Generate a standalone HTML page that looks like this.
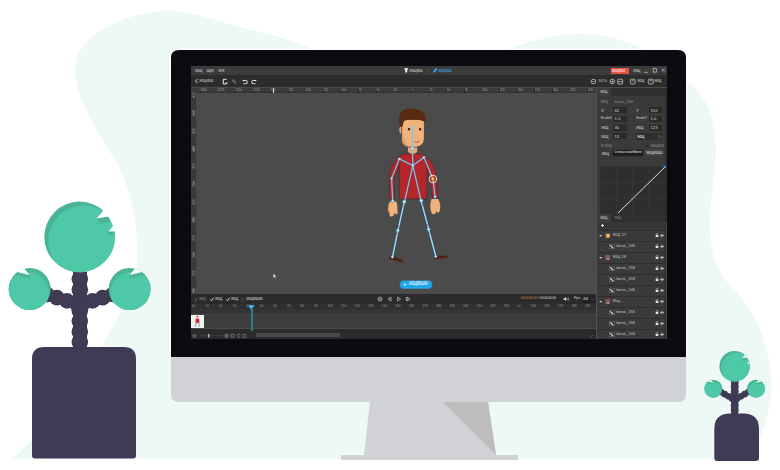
<!DOCTYPE html>
<html><head><meta charset="utf-8">
<style>
html,body{margin:0;padding:0;background:#fff;}
body{width:780px;height:470px;overflow:hidden;position:relative;font-family:"Liberation Sans",sans-serif;}
.a{position:absolute;}
.x{position:absolute;font-size:4.2px;line-height:5px;color:#dadada;white-space:nowrap;margin-top:-0.9px;}
.d{color:#8a8a8a;}
.inp{position:absolute;height:6px;background:#2a2a2a;}
svg{position:absolute;left:0;top:0;overflow:visible;}
</style></head><body>
<svg width="780" height="470" viewBox="0 0 780 470">
  <path fill="#eef8f5" d="M163 11 C120 14 78 36 75 66 C73 92 96 130 118 165 C134 195 140 240 136 270 C130 300 110 330 90 370 C60 420 30 440 12 459 L751 459 C760 440 769 415 771 398 C773 378 770 362 765 345 C760 322 748 305 734 289 C724 280 716 268 712 250 C706 215 714 190 716 150 C716 110 700 90 686 81 L686 50 L645 50 C620 38 600 34 579 34 C555 34 530 42 504 50 L316 50 C295 42 272 34 250 30 C220 22 190 10 163 11 Z"/>
  <path fill="#fff" d="M170 357 V58 Q170 49 179 49 H678 Q687 49 687 58 V357 Z"/>
  <path fill="#0b0b11" d="M171 358 V58 Q171 50 179 50 H678 Q686 50 686 58 V358 Z"/>
  <path fill="#d1d2d6" d="M171 357 L686 357 L686 394 Q686 402 678 402 L179 402 Q171 402 171 394 Z"/>
  <path fill="#d1d2d6" d="M370 402 L488 402 L496 455 L364 455 Z"/>
  <path fill="#bdbdbe" d="M443 402 L488 402 L496 455 Z"/>
  <rect x="341" y="455" width="177" height="5" fill="#d1d2d6"/>
</svg>
<!-- SCREEN -->
<div class="a" style="left:191px;top:66px;width:476px;height:273px;background:#4b4b4b;overflow:hidden;"></div>
<!-- menubar -->
<div class="a" style="left:191px;top:66px;width:476px;height:9.3px;background:#3b3b3c;"></div>
<div class="x" style="left:195px;top:68.5px;"><span style="letter-spacing:-0.45px">ЖЩ</span></div>
<div class="x" style="left:206.5px;top:68.5px;"><span style="letter-spacing:-0.45px">ЩЖ</span></div>
<div class="x" style="left:218px;top:68.5px;"><span style="letter-spacing:-0.45px">ЖФ</span></div>
<!-- center menu -->
<svg class="a" style="left:400px;top:66px" width="60" height="9" viewBox="400 66 60 9">
  <path d="M404.2 68.6 L405.6 68 Q406.2 68.8 406.8 68 L408.2 68.6 L407.6 70 L407.2 69.8 V72.4 H405.2 V69.8 L404.8 70 Z" fill="#f0f0f0"/>
  <path d="M426.5 68.8 L428 70.3 L426.5 71.8" stroke="#777" stroke-width="0.5" fill="none"/>
  <path d="M436.2 68 L433.5 71 L433.2 72.6 L434.8 72.2 L437.4 69.2 Z" fill="#3aaaf5"/>
</svg>
<div class="x" style="left:409px;top:68.5px;"><span style="letter-spacing:-0.45px">ЖЩФШ</span></div>
<div class="x" style="left:438px;top:68.5px;color:#45b4ff"><span style="letter-spacing:-0.45px">ЖЩФШ</span></div>
<!-- red badge -->
<div class="a" style="left:611px;top:68px;width:18px;height:6px;background:#e5523e;"></div>
<div class="x" style="left:611.5px;top:68.5px;color:#fff"><span style="letter-spacing:-0.45px">ЖЩФШ</span></div>
<div class="x" style="left:633px;top:68.5px;"><span style="letter-spacing:-0.45px">ЖЩ</span></div>
<svg class="a" style="left:640px;top:66px" width="27" height="9" viewBox="640 66 27 9">
  <path d="M644 72.3 H648" stroke="#ccc" stroke-width="0.7"/>
  <rect x="653.2" y="68.7" width="3.4" height="3.4" stroke="#ccc" stroke-width="0.7" fill="none"/>
  <path d="M661.8 68.6 L664.8 71.6 M664.8 68.6 L661.8 71.6" stroke="#ccc" stroke-width="0.7"/>
</svg>
<!-- toolbar -->
<div class="a" style="left:191px;top:75.3px;width:476px;height:12.2px;background:#2c2c2c;"></div>
<svg class="a" style="left:191px;top:74px;" width="476" height="14" viewBox="191 74 476 14">
  <path d="M197.5 79 L195.5 81 L197.5 83" stroke="#ddd" stroke-width="0.9" fill="none"/>
  <path d="M226.5 79.3 H223.3 V84 H226" stroke="#eee" stroke-width="1" fill="none"/>
  <circle cx="226.6" cy="83.2" r="0.9" fill="#eee"/>
  <path d="M232 80 L235.3 83.7 M233 79.2 L236.2 82.8" stroke="#888" stroke-width="0.9" fill="none"/>
  <path d="M243.3 80.5 H245.8 A1.6 1.6 0 0 1 245.8 83.7 H243.5" stroke="#eee" stroke-width="0.9" fill="none"/>
  <circle cx="243.3" cy="80.5" r="0.7" fill="#fff"/>
  <path d="M255.7 80.5 H253.2 A1.6 1.6 0 0 0 253.2 83.7 H255.5" stroke="#eee" stroke-width="0.9" fill="none"/>
  <circle cx="255.7" cy="80.5" r="0.7" fill="#fff"/>
  <circle cx="593.5" cy="81.5" r="2.3" stroke="#ddd" stroke-width="0.7" fill="none"/>
  <path d="M592.3 81.5 H594.7" stroke="#ddd" stroke-width="0.6"/>
  <circle cx="612.3" cy="81.5" r="2.3" stroke="#ddd" stroke-width="0.7" fill="none"/>
  <path d="M611.1 81.5 H613.5 M612.3 80.3 V82.7" stroke="#ddd" stroke-width="0.6"/>
  <rect x="617.8" y="79.2" width="4.8" height="4.8" rx="0.6" stroke="#ddd" stroke-width="0.7" fill="none"/>
  <path d="M617.8 81.6 H622.6" stroke="#ddd" stroke-width="0.6"/>
  <rect x="630.3" y="79.2" width="4.8" height="4.8" rx="1" stroke="#ddd" stroke-width="0.7" fill="none"/>
  <path d="M631.5 80.8 H634" stroke="#ddd" stroke-width="0.6"/>
  <rect x="648.3" y="79.2" width="4.8" height="4.8" rx="1" stroke="#ddd" stroke-width="0.7" fill="none"/>
  <path d="M649.5 80.8 H652" stroke="#ddd" stroke-width="0.6"/>
</svg>
<div class="x" style="left:199px;top:79px;letter-spacing:-0.2px">ЖЩФШ</div>
<div class="x" style="left:598.5px;top:79px;font-size:4.2px">51%</div>
<div class="x" style="left:637px;top:79px;"><span style="letter-spacing:-0.45px">ЖЩ</span></div>
<div class="x" style="left:654px;top:79px;"><span style="letter-spacing:-0.45px">ЖЩ</span></div>
<!-- top ruler -->
<div class="a" style="left:191px;top:87.5px;width:406px;height:5px;background:#3a3a3a;"></div>
<div class="a" style="left:196px;top:91.5px;width:401px;height:1px;background:repeating-linear-gradient(90deg,#2a2a2a 0 1px,transparent 1px 3.4px);"></div>
<div class="a" style="left:196px;top:87.5px;width:401px;height:5px;background:repeating-linear-gradient(90deg,#222 0 0.8px,transparent 0.8px 17.6px);background-position:4px 0;"></div>
<div class="a" style="left:273px;top:87.5px;width:1px;height:5px;background:#ddd;"></div>
<!-- left ruler -->
<div class="a" style="left:191px;top:92.5px;width:5px;height:201.5px;background:#3a3a3a;"></div>
<div class="a" style="left:195px;top:92.5px;width:1px;height:201.5px;background:repeating-linear-gradient(180deg,#2a2a2a 0 1px,transparent 1px 3.4px);"></div>

<div class="x" style="left:199.5px;top:89.2px;font-size:3.2px;line-height:4px;color:#a0a0a0">2300</div>
<div class="x" style="left:217.2px;top:89.2px;font-size:3.2px;line-height:4px;color:#a0a0a0">2275</div>
<div class="x" style="left:234.8px;top:89.2px;font-size:3.2px;line-height:4px;color:#a0a0a0">2250</div>
<div class="x" style="left:252.5px;top:89.2px;font-size:3.2px;line-height:4px;color:#a0a0a0">2225</div>
<div class="x" style="left:270.1px;top:89.2px;font-size:3.2px;line-height:4px;color:#a0a0a0">200</div>
<div class="x" style="left:287.8px;top:89.2px;font-size:3.2px;line-height:4px;color:#a0a0a0">175</div>
<div class="x" style="left:305.4px;top:89.2px;font-size:3.2px;line-height:4px;color:#a0a0a0">150</div>
<div class="x" style="left:323.0px;top:89.2px;font-size:3.2px;line-height:4px;color:#a0a0a0">125</div>
<div class="x" style="left:340.7px;top:89.2px;font-size:3.2px;line-height:4px;color:#a0a0a0">100</div>
<div class="x" style="left:358.3px;top:89.2px;font-size:3.2px;line-height:4px;color:#a0a0a0">75</div>
<div class="x" style="left:376.0px;top:89.2px;font-size:3.2px;line-height:4px;color:#a0a0a0">50</div>
<div class="x" style="left:393.6px;top:89.2px;font-size:3.2px;line-height:4px;color:#a0a0a0">25</div>
<div class="x" style="left:411.3px;top:89.2px;font-size:3.2px;line-height:4px;color:#a0a0a0">0</div>
<div class="x" style="left:428.9px;top:89.2px;font-size:3.2px;line-height:4px;color:#a0a0a0">25</div>
<div class="x" style="left:446.6px;top:89.2px;font-size:3.2px;line-height:4px;color:#a0a0a0">50</div>
<div class="x" style="left:464.2px;top:89.2px;font-size:3.2px;line-height:4px;color:#a0a0a0">75</div>
<div class="x" style="left:481.9px;top:89.2px;font-size:3.2px;line-height:4px;color:#a0a0a0">100</div>
<div class="x" style="left:499.5px;top:89.2px;font-size:3.2px;line-height:4px;color:#a0a0a0">125</div>
<div class="x" style="left:517.2px;top:89.2px;font-size:3.2px;line-height:4px;color:#a0a0a0">150</div>
<div class="x" style="left:534.8px;top:89.2px;font-size:3.2px;line-height:4px;color:#a0a0a0">175</div>
<div class="x" style="left:552.5px;top:89.2px;font-size:3.2px;line-height:4px;color:#a0a0a0">200</div>
<div class="x" style="left:570.1px;top:89.2px;font-size:3.2px;line-height:4px;color:#a0a0a0">225</div>
<div class="x" style="left:587.8px;top:89.2px;font-size:3.2px;line-height:4px;color:#a0a0a0">250</div>
<div class="x" style="left:191.2px;top:95.0px;font-size:3.2px;line-height:4px;color:#a8a8a8;transform:rotate(-90deg);transform-origin:2px 2px;width:6px;text-align:center;margin-left:0.6px">475</div>
<div class="x" style="left:191.2px;top:112.8px;font-size:3.2px;line-height:4px;color:#a8a8a8;transform:rotate(-90deg);transform-origin:2px 2px;width:6px;text-align:center;margin-left:0.6px">450</div>
<div class="x" style="left:191.2px;top:130.6px;font-size:3.2px;line-height:4px;color:#a8a8a8;transform:rotate(-90deg);transform-origin:2px 2px;width:6px;text-align:center;margin-left:0.6px">425</div>
<div class="x" style="left:191.2px;top:148.4px;font-size:3.2px;line-height:4px;color:#a8a8a8;transform:rotate(-90deg);transform-origin:2px 2px;width:6px;text-align:center;margin-left:0.6px">400</div>
<div class="x" style="left:191.2px;top:166.2px;font-size:3.2px;line-height:4px;color:#a8a8a8;transform:rotate(-90deg);transform-origin:2px 2px;width:6px;text-align:center;margin-left:0.6px">375</div>
<div class="x" style="left:191.2px;top:184.0px;font-size:3.2px;line-height:4px;color:#a8a8a8;transform:rotate(-90deg);transform-origin:2px 2px;width:6px;text-align:center;margin-left:0.6px">350</div>
<div class="x" style="left:191.2px;top:201.8px;font-size:3.2px;line-height:4px;color:#a8a8a8;transform:rotate(-90deg);transform-origin:2px 2px;width:6px;text-align:center;margin-left:0.6px">325</div>
<div class="x" style="left:191.2px;top:219.6px;font-size:3.2px;line-height:4px;color:#a8a8a8;transform:rotate(-90deg);transform-origin:2px 2px;width:6px;text-align:center;margin-left:0.6px">300</div>
<div class="x" style="left:191.2px;top:237.4px;font-size:3.2px;line-height:4px;color:#a8a8a8;transform:rotate(-90deg);transform-origin:2px 2px;width:6px;text-align:center;margin-left:0.6px">275</div>
<div class="x" style="left:191.2px;top:255.2px;font-size:3.2px;line-height:4px;color:#a8a8a8;transform:rotate(-90deg);transform-origin:2px 2px;width:6px;text-align:center;margin-left:0.6px">250</div>
<div class="x" style="left:191.2px;top:273.0px;font-size:3.2px;line-height:4px;color:#a8a8a8;transform:rotate(-90deg);transform-origin:2px 2px;width:6px;text-align:center;margin-left:0.6px">225</div>
<div class="x" style="left:191.2px;top:290.8px;font-size:3.2px;line-height:4px;color:#a8a8a8;transform:rotate(-90deg);transform-origin:2px 2px;width:6px;text-align:center;margin-left:0.6px">200</div>
<!-- canvas dots / cursor -->
<svg class="a" style="left:196px;top:92px" width="401" height="202" viewBox="196 92 401 202">
  <path d="M273.2 273.5 L273.2 278 L274.3 277 L275.2 279 L275.8 278.7 L275 276.8 L276.5 276.6 Z" fill="#e8e8e8" stroke="#333" stroke-width="0.25"/>
  <!-- add animation button -->
  <rect x="399.5" y="280.3" width="33" height="8.7" rx="4.3" fill="#1ea5ea" stroke="#6a3a22" stroke-width="0.6" stroke-dasharray="1 0.6"/>
  <path d="M403.6 284.6 H406.4 M405 283.2 V286" stroke="#fff" stroke-width="0.7"/>
  
</svg>
<div class="x" style="left:408.8px;top:282.3px;color:#fff;font-size:4.6px;letter-spacing:-0.3px">ЖЩФШЖ</div>
<!-- character -->
<svg class="a" style="left:380px;top:100px" width="80" height="170" viewBox="380 100 80 170">
  <!-- shoes -->
  <path d="M392 255 Q388.5 257 389 259 L403.5 263 Q403.8 261 401 259.5 Z" fill="#4e2410"/>
  <path d="M434 256 L434.5 259.5 L448.5 257.5 Q448 255.5 444 255.5 Z" fill="#4e2410"/>
  <!-- arms -->
  <path d="M398.2 156.2 Q391.5 163 389.2 176.5 L389.6 199.3 L394.6 199.3 L394.2 177.5 L400.6 163.5 Z" fill="#b3262a" stroke="#3a2a2a" stroke-width="0.5"/>
  <path d="M424.5 155.5 Q432.5 161 435.5 172 L438.5 197.5 L432.6 198.2 L430 180 L426.2 166 Z" fill="#b3262a" stroke="#3a2a2a" stroke-width="0.5"/>
  <!-- torso -->
  <path d="M399.5 155.5 Q406 153.6 410 153.6 L415 153.6 Q420 153.6 425 155.2 L427 168 L427 199 L399.3 199 L399.3 168 Z" fill="#b3262a" stroke="#3a2a2a" stroke-width="0.6"/>
  <!-- neck -->
  <path d="M408 145 H417.2 V152 Q413 156 408 152 Z" fill="#e7a774"/>
  <!-- hands -->
  <path d="M389.8 201.5 Q388 205 388 209 L388.6 213 L389.3 210.5 L389.6 215.8 L390.6 216.4 L391.5 216.5 L392.5 216.3 L393.6 215.5 L394.5 213 L396.5 214.5 L397.6 213.5 L397.4 207 Q397 203 396.2 201.5 Z" fill="#f0b27a"/>
  <path d="M431.5 199 Q430.3 202 430.3 206 L430.8 211 L431.8 213.5 L433 214 L434.3 214.2 L435.5 213.5 L436 211 L437 212.5 L438.5 212.8 L439.8 211 L440.3 207 Q440 202 438.2 199 Z" fill="#f0b27a"/>
  <!-- head -->
  <ellipse cx="401.3" cy="130" rx="2" ry="3.5" fill="#e7a774"/>
  <path d="M401.5 119.5 H424.4 V138 Q424.4 147.4 413.5 147.4 Q401.5 147.4 401.5 139 Z" fill="#f0b27a" stroke="#383838" stroke-width="0.7"/>
  <path d="M402 128 Q403 140 408 147 Q401.8 146 401.8 139 Z" fill="#d9925a" opacity=".6"/>
  <path d="M399.6 126.5 C398.6 120 399 114 402 111 C405 108.8 409 108.5 412 108.6 C417 108.7 421.5 110.5 424 113.5 C426 116 426.3 119 425.6 122 C423 120.8 421 120.3 419 120 C416 119.4 413 119.2 410 119.6 C407 120 405 120.5 403.7 121.5 L402.7 126.5 Z" fill="#5a2a10"/>
  
  <ellipse cx="409" cy="129.3" rx="1.1" ry="1.3" fill="#1a1a1a"/>
  <ellipse cx="420.1" cy="129.3" rx="1.1" ry="1.3" fill="#1a1a1a"/>
  <path d="M414.5 142 Q417 143.3 419.5 141.2" stroke="#b03030" stroke-width="0.7" fill="none"/>
  <!-- bones -->
  <g stroke="#22323e" stroke-width="2.6" fill="none" stroke-linecap="round" opacity=".75">
    <path d="M404.3 201.7 L397.9 230.4 L392.4 256.9 M421.2 200.6 L428.7 229.3 L435.8 256.4"/>
  </g>
  <g stroke="#74c8f0" stroke-width="1.25" fill="none" stroke-linecap="round">
    <path d="M412.5 127 L412.5 148 L412.8 165.6 L399.4 158.9 M412.8 165.6 L424 157.4 L432.9 179 L435.1 196.9 M399.4 158.9 L391.6 178.3 L392.7 200.6 M412.8 165.6 L404.6 201.4 M412.8 165.6 L421 200.6"/>
    <path d="M404.3 201.7 L397.9 230.4 L392.4 256.9 M421.2 200.6 L428.7 229.3 L435.8 256.4" stroke-width="1.6"/>
  </g>
  <g stroke="#d9f1fc" stroke-width="0.5" fill="none">
    <path d="M404.3 203 L398.3 229 M397.9 232 L393 255.5 M421.2 202 L428.3 228 M428.9 231 L435.5 255"/>
  </g>
  <g fill="#d33" >
    <circle cx="403.2" cy="206" r="0.6"/><circle cx="398.8" cy="226" r="0.6"/><circle cx="397.2" cy="233.5" r="0.6"/>
    <circle cx="422.3" cy="205" r="0.6"/><circle cx="427.6" cy="225" r="0.6"/><circle cx="429.2" cy="233" r="0.6"/>
  </g>
  <g fill="#cfeefd" stroke="#4ab3ea" stroke-width="0.5">
    <circle cx="412.5" cy="127" r="1.2"/><circle cx="412.5" cy="148" r="1.3"/><circle cx="412.8" cy="165.6" r="1.2"/>
    <circle cx="399.4" cy="158.9" r="1.2"/><circle cx="424" cy="157.4" r="1.2"/>
    <circle cx="391.6" cy="178.3" r="1.1"/>
    <circle cx="392.7" cy="200.6" r="1.2"/><circle cx="435.1" cy="196.9" r="1.2"/>
    <circle cx="404.3" cy="201.7" r="1.6"/><circle cx="421.2" cy="200.6" r="1.6"/>
    <circle cx="397.9" cy="230.4" r="1.4"/><circle cx="428.7" cy="229.3" r="1.4"/>
    <circle cx="392.4" cy="256.9" r="1.2"/><circle cx="435.8" cy="256.4" r="1.2"/>
  </g>
  <circle cx="432.9" cy="179" r="3.8" fill="none" stroke="#f4f4f4" stroke-width="0.9"/>
  <circle cx="432.9" cy="179" r="1.8" fill="#f0a81c"/>
  <circle cx="432.9" cy="178.6" r="0.8" fill="#ffe066"/>
</svg>

<!-- RIGHT PANEL -->
<div class="a" style="left:596px;top:87.5px;width:1px;height:251.5px;background:#515151;"></div>
<div class="a" style="left:597px;top:87.5px;width:70px;height:251.5px;background:#3a3a3a;"></div>
<div class="a" style="left:597.5px;top:87.5px;width:69.5px;height:8.5px;background:#303030;"></div>
<div class="a" style="left:597.5px;top:87.5px;width:13px;height:8.5px;background:#3d3d3d;"></div>
<div class="a" style="left:665px;top:87.5px;width:2px;height:251.5px;background:#2c2c2c;"></div>
<div class="x" style="left:600px;top:89.5px;"><span style="letter-spacing:-0.45px">ЖЩ</span></div>
<!-- props -->
<div class="x d" style="left:600.5px;top:100px;"><span style="letter-spacing:-0.45px">ЖЩ</span></div>
<div class="x d" style="left:614.5px;top:100px;">bone_158</div>
<div class="x" style="left:601px;top:108.5px;">X</div>
<div class="inp" style="left:613px;top:107px;width:14px;"></div>
<div class="x" style="left:614.5px;top:108.5px;">62</div>
<div class="x" style="left:636px;top:108.5px;">Y</div>
<div class="inp" style="left:649px;top:107px;width:13px;"></div>
<div class="x" style="left:650.5px;top:108.5px;">152</div>
<div class="x" style="left:600.5px;top:117.2px;font-size:3.6px">ScaleX</div>
<div class="inp" style="left:613px;top:115.7px;width:14px;"></div>
<div class="x" style="left:614.5px;top:117px;">1.0</div>
<div class="x" style="left:636px;top:117.2px;font-size:3.6px">ScaleY</div>
<div class="inp" style="left:649px;top:115.7px;width:13px;"></div>
<div class="x" style="left:650.5px;top:117px;">1.0</div>
<div class="x" style="left:601px;top:125.8px;"><span style="letter-spacing:-0.45px">ЖЩ</span></div>
<div class="inp" style="left:613px;top:124.5px;width:14px;"></div>
<div class="x" style="left:614.5px;top:125.8px;">30</div>
<div class="x" style="left:636px;top:125.8px;"><span style="letter-spacing:-0.45px">ЖЩ</span></div>
<div class="inp" style="left:649px;top:124.5px;width:13px;"></div>
<div class="x" style="left:650.5px;top:125.8px;">123</div>
<div class="x" style="left:601px;top:134.5px;"><span style="letter-spacing:-0.45px">ЖЩ</span></div>
<div class="inp" style="left:613px;top:133px;width:14px;"></div>
<div class="x" style="left:614.5px;top:134.5px;">13</div>
<div class="inp" style="left:636px;top:133.2px;width:26px;height:6.4px;background:#2e2e2e"></div>
<div class="a" style="left:657.5px;top:133.2px;width:0.5px;height:6.4px;background:#444"></div>
<div class="x" style="left:637px;top:134.5px;color:#fff"><span style="letter-spacing:-0.45px">ЖЩ</span></div>
<svg class="a" style="left:658.8px;top:135.6px" width="3" height="2" viewBox="0 0 3 2"><path d="M0.3 0.3 L1.5 1.5 L2.7 0.3" stroke="#8a8a8a" stroke-width="0.5" fill="none"/></svg>
<div class="x d" style="left:600.5px;top:143.5px;">IK<span style="letter-spacing:-0.45px">ЖЩ</span></div>
<div class="a" style="left:645.6px;top:144.5px;width:2.5px;height:2.5px;background:#262626;"></div>
<div class="x d" style="left:650.5px;top:143.5px;"><span style="letter-spacing:-0.45px">ЖЩФШ</span></div>
<div class="x" style="left:601.5px;top:151.5px;"><span style="letter-spacing:-0.45px">ЖЩ</span></div>
<div class="inp" style="left:613.3px;top:150.2px;width:29.5px;height:5.5px;background:#1f1f1f;box-shadow:0 0 0 0.4px #2a2a2a"></div>
<div class="x" style="left:614.6px;top:150.6px;font-size:3.6px;color:#eee">Linear.easeNone</div>
<div class="a" style="left:645.2px;top:149.2px;width:17.3px;height:6.4px;background:#444;"></div>
<div class="x" style="left:646px;top:150.5px;"><span style="letter-spacing:-0.45px">ЖЩФШШ</span></div>

<!-- curve -->
<svg class="a" style="left:597px;top:160px;" width="70" height="58" viewBox="597 160 70 58">
  <rect x="600.2" y="166.5" width="64.8" height="47.5" fill="#2e2e2e"/>
  <path d="M616.4 166.5V214 M632.6 166.5V214 M648.8 166.5V214 M600.2 182.3H665 M600.2 198.2H665" stroke="#3c3c3c" stroke-width="0.6"/>
  <path d="M618 213 L665 167" stroke="#eee" stroke-width="0.9"/>
  <circle cx="664.8" cy="167" r="1.2" fill="#3fa9f5"/>
</svg>
<!-- tabs -->
<div class="a" style="left:597.5px;top:214px;width:67.5px;height:7.5px;background:#2f2f2f;"></div>
<div class="a" style="left:597.5px;top:214px;width:13px;height:7.5px;background:#3d3d3d;"></div>
<div class="x" style="left:600px;top:215.5px;"><span style="letter-spacing:-0.45px">ЖЩ</span></div>
<div class="x d" style="left:614px;top:215.5px;"><span style="letter-spacing:-0.45px">ЖЩ</span></div>
<div class="a" style="left:597.5px;top:221.5px;width:67.5px;height:8.5px;background:#363636;"></div>
<div class="a" style="left:601px;top:225.2px;width:3px;height:0.8px;background:#ddd;"></div>
<div class="a" style="left:602.1px;top:224.1px;width:0.8px;height:3px;background:#ddd;"></div>

<div class="a" style="left:597.5px;top:230px;width:67.5px;height:0.8px;background:#2e2e2e;"></div>
<svg class="a" style="left:599px;top:233.5px" width="4" height="4" viewBox="0 0 4 4"><path d="M0.2 1 H3.2 L1.7 2.8 Z" fill="#d0d0d0"/></svg>
<div class="a" style="left:605.3px;top:232.9px;width:5.2px;height:5.2px;background:#555;border-radius:1px;"></div>
<div class="a" style="left:605.6px;top:233.1px;width:4.6px;height:4.6px;background:#e89a3a;border-radius:50%;"></div>
<div class="a" style="left:606.6px;top:233.9px;width:2.6px;height:3px;background:#f2c090;border-radius:1.2px;"></div>
<div class="a" style="left:606.5px;top:233.3px;width:2.8px;height:1.2px;background:#6a3418;border-radius:1.2px 1.2px 0 0;"></div>
<div class="x" style="left:612.5px;top:233.0px;opacity:.85">ЖЩ 17</div>
<svg class="a" style="left:655px;top:233.3px" width="10" height="5" viewBox="0 0 10 5"><path d="M1.1 2 V1.4 A0.9 0.9 0 0 1 2.9 1.4 V2" stroke="#e0e0e0" stroke-width="0.5" fill="none"/><rect x="0.7" y="2" width="2.6" height="2" fill="#e8e8e8"/><path d="M5.2 2.5 Q7 0.6 8.8 2.5 Q7 4.4 5.2 2.5 Z" stroke="#e8e8e8" stroke-width="0.6" fill="none"/><circle cx="7" cy="2.5" r="0.6" fill="#e8e8e8"/></svg>
<div class="a" style="left:597.5px;top:241px;width:67.5px;height:0.8px;background:#2e2e2e;"></div>
<div class="a" style="left:609.3px;top:243.8px;width:5.4px;height:5.4px;background:#333;box-shadow:inset 0 0 0 0.6px #707070;"></div>
<svg class="a" style="left:609.3px;top:243.8px" width="6" height="6"><path d="M1.3 1.3 L4.2 4.2" stroke="#f4f4f4" stroke-width="1.1"/></svg>
<div class="x" style="left:616.5px;top:244.0px;opacity:.85">bone_146</div>
<svg class="a" style="left:655px;top:244.3px" width="10" height="5" viewBox="0 0 10 5"><path d="M1.1 2 V1.4 A0.9 0.9 0 0 1 2.9 1.4 V2" stroke="#e0e0e0" stroke-width="0.5" fill="none"/><rect x="0.7" y="2" width="2.6" height="2" fill="#e8e8e8"/><path d="M5.2 2.5 Q7 0.6 8.8 2.5 Q7 4.4 5.2 2.5 Z" stroke="#e8e8e8" stroke-width="0.6" fill="none"/><circle cx="7" cy="2.5" r="0.6" fill="#e8e8e8"/></svg>
<div class="a" style="left:597.5px;top:252px;width:67.5px;height:0.8px;background:#2e2e2e;"></div>
<svg class="a" style="left:599px;top:255.5px" width="4" height="4" viewBox="0 0 4 4"><path d="M0.2 1 H3.2 L1.7 2.8 Z" fill="#d0d0d0"/></svg>
<div class="a" style="left:605.3px;top:254.9px;width:5.2px;height:5.2px;background:#555;border-radius:1px;"></div>
<div class="a" style="left:605.6px;top:255.1px;width:4.6px;height:4.8px;background:#6a6a6a;"></div>
<div class="a" style="left:607.4px;top:255.3px;width:1.3px;height:2.2px;background:#c33;"></div>
<div class="a" style="left:607.1px;top:257.5px;width:1.9px;height:2.2px;background:#c87a4a;"></div>
<div class="x" style="left:612.5px;top:255.0px;opacity:.85">ЖЩ 18</div>
<svg class="a" style="left:655px;top:255.3px" width="10" height="5" viewBox="0 0 10 5"><path d="M1.1 2 V1.4 A0.9 0.9 0 0 1 2.9 1.4 V2" stroke="#e0e0e0" stroke-width="0.5" fill="none"/><rect x="0.7" y="2" width="2.6" height="2" fill="#e8e8e8"/><path d="M5.2 2.5 Q7 0.6 8.8 2.5 Q7 4.4 5.2 2.5 Z" stroke="#e8e8e8" stroke-width="0.6" fill="none"/><circle cx="7" cy="2.5" r="0.6" fill="#e8e8e8"/></svg>
<div class="a" style="left:597.5px;top:263px;width:67.5px;height:0.8px;background:#2e2e2e;"></div>
<div class="a" style="left:609.3px;top:265.8px;width:5.4px;height:5.4px;background:#333;box-shadow:inset 0 0 0 0.6px #707070;"></div>
<svg class="a" style="left:609.3px;top:265.8px" width="6" height="6"><path d="M1.3 1.3 L4.2 4.2" stroke="#f4f4f4" stroke-width="1.1"/></svg>
<div class="x" style="left:616.5px;top:266.0px;opacity:.85">bone_158</div>
<svg class="a" style="left:655px;top:266.3px" width="10" height="5" viewBox="0 0 10 5"><path d="M1.1 2 V1.4 A0.9 0.9 0 0 1 2.9 1.4 V2" stroke="#e0e0e0" stroke-width="0.5" fill="none"/><rect x="0.7" y="2" width="2.6" height="2" fill="#e8e8e8"/><path d="M5.2 2.5 Q7 0.6 8.8 2.5 Q7 4.4 5.2 2.5 Z" stroke="#e8e8e8" stroke-width="0.6" fill="none"/><circle cx="7" cy="2.5" r="0.6" fill="#e8e8e8"/></svg>
<div class="a" style="left:597.5px;top:274px;width:67.5px;height:0.8px;background:#2e2e2e;"></div>
<div class="a" style="left:609.3px;top:276.8px;width:5.4px;height:5.4px;background:#333;box-shadow:inset 0 0 0 0.6px #707070;"></div>
<svg class="a" style="left:609.3px;top:276.8px" width="6" height="6"><path d="M1.3 1.3 L4.2 4.2" stroke="#f4f4f4" stroke-width="1.1"/></svg>
<div class="x" style="left:616.5px;top:277.0px;opacity:.85">bone_159</div>
<svg class="a" style="left:655px;top:277.3px" width="10" height="5" viewBox="0 0 10 5"><path d="M1.1 2 V1.4 A0.9 0.9 0 0 1 2.9 1.4 V2" stroke="#e0e0e0" stroke-width="0.5" fill="none"/><rect x="0.7" y="2" width="2.6" height="2" fill="#e8e8e8"/><path d="M5.2 2.5 Q7 0.6 8.8 2.5 Q7 4.4 5.2 2.5 Z" stroke="#e8e8e8" stroke-width="0.6" fill="none"/><circle cx="7" cy="2.5" r="0.6" fill="#e8e8e8"/></svg>
<div class="a" style="left:597.5px;top:285px;width:67.5px;height:0.8px;background:#2e2e2e;"></div>
<div class="a" style="left:609.3px;top:287.8px;width:5.4px;height:5.4px;background:#333;box-shadow:inset 0 0 0 0.6px #707070;"></div>
<svg class="a" style="left:609.3px;top:287.8px" width="6" height="6"><path d="M1.3 1.3 L4.2 4.2" stroke="#f4f4f4" stroke-width="1.1"/></svg>
<div class="x" style="left:616.5px;top:288.0px;opacity:.85">bone_145</div>
<svg class="a" style="left:655px;top:288.3px" width="10" height="5" viewBox="0 0 10 5"><path d="M1.1 2 V1.4 A0.9 0.9 0 0 1 2.9 1.4 V2" stroke="#e0e0e0" stroke-width="0.5" fill="none"/><rect x="0.7" y="2" width="2.6" height="2" fill="#e8e8e8"/><path d="M5.2 2.5 Q7 0.6 8.8 2.5 Q7 4.4 5.2 2.5 Z" stroke="#e8e8e8" stroke-width="0.6" fill="none"/><circle cx="7" cy="2.5" r="0.6" fill="#e8e8e8"/></svg>
<div class="a" style="left:597.5px;top:296px;width:67.5px;height:0.8px;background:#2e2e2e;"></div>
<svg class="a" style="left:599px;top:299.5px" width="4" height="4" viewBox="0 0 4 4"><path d="M0.2 1 H3.2 L1.7 2.8 Z" fill="#d0d0d0"/></svg>
<div class="a" style="left:605.3px;top:298.9px;width:5.2px;height:5.2px;background:#555;border-radius:1px;"></div>
<div class="a" style="left:605.6px;top:299.1px;width:4.6px;height:4.8px;background:#6a6a6a;"></div>
<div class="a" style="left:607.4px;top:299.3px;width:1.3px;height:2.2px;background:#c33;"></div>
<div class="a" style="left:607.1px;top:301.5px;width:1.9px;height:2.2px;background:#c87a4a;"></div>
<div class="x" style="left:612.5px;top:299.0px;opacity:.85">Жщ...</div>
<svg class="a" style="left:655px;top:299.3px" width="10" height="5" viewBox="0 0 10 5"><path d="M1.1 2 V1.4 A0.9 0.9 0 0 1 2.9 1.4 V2" stroke="#e0e0e0" stroke-width="0.5" fill="none"/><rect x="0.7" y="2" width="2.6" height="2" fill="#e8e8e8"/><path d="M5.2 2.5 Q7 0.6 8.8 2.5 Q7 4.4 5.2 2.5 Z" stroke="#e8e8e8" stroke-width="0.6" fill="none"/><circle cx="7" cy="2.5" r="0.6" fill="#e8e8e8"/></svg>
<div class="a" style="left:597.5px;top:307px;width:67.5px;height:0.8px;background:#2e2e2e;"></div>
<div class="a" style="left:609.3px;top:309.8px;width:5.4px;height:5.4px;background:#333;box-shadow:inset 0 0 0 0.6px #707070;"></div>
<svg class="a" style="left:609.3px;top:309.8px" width="6" height="6"><path d="M1.3 1.3 L4.2 4.2" stroke="#f4f4f4" stroke-width="1.1"/></svg>
<div class="x" style="left:616.5px;top:310.0px;opacity:.85">bone_155</div>
<svg class="a" style="left:655px;top:310.3px" width="10" height="5" viewBox="0 0 10 5"><path d="M1.1 2 V1.4 A0.9 0.9 0 0 1 2.9 1.4 V2" stroke="#e0e0e0" stroke-width="0.5" fill="none"/><rect x="0.7" y="2" width="2.6" height="2" fill="#e8e8e8"/><path d="M5.2 2.5 Q7 0.6 8.8 2.5 Q7 4.4 5.2 2.5 Z" stroke="#e8e8e8" stroke-width="0.6" fill="none"/><circle cx="7" cy="2.5" r="0.6" fill="#e8e8e8"/></svg>
<div class="a" style="left:597.5px;top:318px;width:67.5px;height:0.8px;background:#2e2e2e;"></div>
<div class="a" style="left:609.3px;top:320.8px;width:5.4px;height:5.4px;background:#333;box-shadow:inset 0 0 0 0.6px #707070;"></div>
<svg class="a" style="left:609.3px;top:320.8px" width="6" height="6"><path d="M1.3 1.3 L4.2 4.2" stroke="#f4f4f4" stroke-width="1.1"/></svg>
<div class="x" style="left:616.5px;top:321.0px;opacity:.85">bone_156</div>
<svg class="a" style="left:655px;top:321.3px" width="10" height="5" viewBox="0 0 10 5"><path d="M1.1 2 V1.4 A0.9 0.9 0 0 1 2.9 1.4 V2" stroke="#e0e0e0" stroke-width="0.5" fill="none"/><rect x="0.7" y="2" width="2.6" height="2" fill="#e8e8e8"/><path d="M5.2 2.5 Q7 0.6 8.8 2.5 Q7 4.4 5.2 2.5 Z" stroke="#e8e8e8" stroke-width="0.6" fill="none"/><circle cx="7" cy="2.5" r="0.6" fill="#e8e8e8"/></svg>
<div class="a" style="left:597.5px;top:329px;width:67.5px;height:0.8px;background:#2e2e2e;"></div>
<div class="a" style="left:609.3px;top:331.8px;width:5.4px;height:5.4px;background:#333;box-shadow:inset 0 0 0 0.6px #707070;"></div>
<svg class="a" style="left:609.3px;top:331.8px" width="6" height="6"><path d="M1.3 1.3 L4.2 4.2" stroke="#f4f4f4" stroke-width="1.1"/></svg>
<div class="x" style="left:616.5px;top:332.0px;opacity:.85">bone_144</div>
<svg class="a" style="left:655px;top:332.3px" width="10" height="5" viewBox="0 0 10 5"><path d="M1.1 2 V1.4 A0.9 0.9 0 0 1 2.9 1.4 V2" stroke="#e0e0e0" stroke-width="0.5" fill="none"/><rect x="0.7" y="2" width="2.6" height="2" fill="#e8e8e8"/><path d="M5.2 2.5 Q7 0.6 8.8 2.5 Q7 4.4 5.2 2.5 Z" stroke="#e8e8e8" stroke-width="0.6" fill="none"/><circle cx="7" cy="2.5" r="0.6" fill="#e8e8e8"/></svg>
<div class="a" style="left:666px;top:222px;width:1px;height:117px;background:#4a4a4a;"></div>
<!-- TIMELINE -->
<div class="a" style="left:191px;top:294px;width:405px;height:10px;background:#2b2b2b;"></div>
<div class="a" style="left:194.6px;top:298px;width:2.8px;height:3.5px;box-shadow:inset 0 0 0 0.5px #555;"></div>
<div class="x d" style="left:198.7px;top:297px;"><span style="letter-spacing:-0.45px">ЖЩ</span></div>
<svg class="a" style="left:191px;top:294px" width="406" height="10" viewBox="191 294 406 10">
  <path d="M210.3 299.5 L211.5 300.8 L213.5 297.8" stroke="#eee" stroke-width="0.8" fill="none"/>
  <path d="M226.3 299.5 L227.5 300.8 L229.5 297.8" stroke="#eee" stroke-width="0.8" fill="none"/>
  <circle cx="380" cy="299" r="2" stroke="#ccc" stroke-width="0.7" fill="none"/>
  <path d="M379.5 298 V300 M380.5 298 V300" stroke="#ccc" stroke-width="0.4"/>
  <path d="M391 297 L388 299 L391 301 Z" stroke="#ccc" stroke-width="0.7" fill="none"/>
  <path d="M397.7 297 L400.5 299 L397.7 301 Z" stroke="#ccc" stroke-width="0.7" fill="none"/>
  <path d="M407 297 L410 299 L407 301 Z" stroke="#ccc" stroke-width="0.7" fill="none"/>
  <path d="M406.3 297 V301" stroke="#ccc" stroke-width="0.6"/>
</svg>
<div class="x" style="left:214.8px;top:297px;"><span style="letter-spacing:-0.45px">ЖЩ</span></div>
<div class="x" style="left:230.8px;top:297px;"><span style="letter-spacing:-0.45px">ЖЩ</span></div>
<div class="a" style="left:241.3px;top:298px;width:2.8px;height:3.5px;box-shadow:inset 0 0 0 0.5px #555;"></div>
<div class="x" style="left:246px;top:297px;"><span style="letter-spacing:-0.45px">ЖЩФШЖ</span></div>
<div class="x" style="left:521px;top:297.2px;color:#d8803a;font-size:3.3px;letter-spacing:-0.15px">00:00:00:13</div>
<div class="x" style="left:538.5px;top:297.2px;font-size:3.3px;letter-spacing:-0.15px">/ 00:00:00:00</div>
<svg class="a" style="left:562px;top:296px" width="10" height="6" viewBox="562 296 10 6">
  <path d="M563.5 298.2 H564.6 L566.2 297 V301 L564.6 299.8 H563.5 Z" fill="#ddd"/>
  <path d="M567.3 298 V300" stroke="#ddd" stroke-width="0.5"/>
  <path d="M568.6 297.5 V300.5" stroke="#ddd" stroke-width="0.5"/>
</svg>
<div class="x" style="left:574px;top:297px;font-size:3.8px">Fps</div>
<div class="a" style="left:581.5px;top:296px;width:13.5px;height:6.5px;background:#222;"></div>
<div class="x" style="left:583px;top:297px;color:#fff;font-size:4.4px">24</div>
<svg class="a" style="left:590.6px;top:298.3px" width="3" height="2" viewBox="0 0 3 2"><path d="M0.3 0.3 L1.5 1.5 L2.7 0.3" stroke="#8a8a8a" stroke-width="0.5" fill="none"/></svg>
<!-- timeline ruler -->
<div class="a" style="left:191px;top:304px;width:405px;height:6px;background:#303030;"></div>


<div class="x" style="left:192.0px;top:304.8px;font-size:3.2px;line-height:4px;color:#9a9a9a">0s</div>
<div class="x" style="left:205.6px;top:304.8px;font-size:3.2px;line-height:4px;color:#9a9a9a">10</div>
<div class="x" style="left:219.1px;top:304.8px;font-size:3.2px;line-height:4px;color:#9a9a9a">20</div>
<div class="x" style="left:232.7px;top:304.8px;font-size:3.2px;line-height:4px;color:#9a9a9a">30</div>
<div class="x" style="left:246.2px;top:304.8px;font-size:3.2px;line-height:4px;color:#9a9a9a">40</div>
<div class="x" style="left:259.8px;top:304.8px;font-size:3.2px;line-height:4px;color:#9a9a9a">50</div>
<div class="x" style="left:273.3px;top:304.8px;font-size:3.2px;line-height:4px;color:#9a9a9a">60</div>
<div class="x" style="left:286.9px;top:304.8px;font-size:3.2px;line-height:4px;color:#9a9a9a">70</div>
<div class="x" style="left:300.4px;top:304.8px;font-size:3.2px;line-height:4px;color:#9a9a9a">80</div>
<div class="x" style="left:314.0px;top:304.8px;font-size:3.2px;line-height:4px;color:#9a9a9a">90</div>
<div class="x" style="left:327.5px;top:304.8px;font-size:3.2px;line-height:4px;color:#9a9a9a">100</div>
<div class="x" style="left:341.1px;top:304.8px;font-size:3.2px;line-height:4px;color:#9a9a9a">110</div>
<div class="x" style="left:354.6px;top:304.8px;font-size:3.2px;line-height:4px;color:#9a9a9a">120</div>
<div class="x" style="left:368.2px;top:304.8px;font-size:3.2px;line-height:4px;color:#9a9a9a">130</div>
<div class="x" style="left:381.7px;top:304.8px;font-size:3.2px;line-height:4px;color:#9a9a9a">140</div>
<div class="x" style="left:395.3px;top:304.8px;font-size:3.2px;line-height:4px;color:#9a9a9a">150</div>
<div class="x" style="left:408.8px;top:304.8px;font-size:3.2px;line-height:4px;color:#9a9a9a">160</div>
<div class="x" style="left:422.4px;top:304.8px;font-size:3.2px;line-height:4px;color:#9a9a9a">170</div>
<div class="x" style="left:435.9px;top:304.8px;font-size:3.2px;line-height:4px;color:#9a9a9a">180</div>
<div class="x" style="left:449.5px;top:304.8px;font-size:3.2px;line-height:4px;color:#9a9a9a">190</div>
<div class="x" style="left:463.0px;top:304.8px;font-size:3.2px;line-height:4px;color:#9a9a9a">200</div>
<div class="x" style="left:476.6px;top:304.8px;font-size:3.2px;line-height:4px;color:#9a9a9a">210</div>
<div class="x" style="left:490.1px;top:304.8px;font-size:3.2px;line-height:4px;color:#9a9a9a">220</div>
<div class="x" style="left:503.7px;top:304.8px;font-size:3.2px;line-height:4px;color:#9a9a9a">230</div>
<div class="x" style="left:517.2px;top:304.8px;font-size:3.2px;line-height:4px;color:#9a9a9a">1s</div>
<div class="x" style="left:530.8px;top:304.8px;font-size:3.2px;line-height:4px;color:#9a9a9a">250</div>
<div class="x" style="left:544.3px;top:304.8px;font-size:3.2px;line-height:4px;color:#9a9a9a">260</div>
<div class="x" style="left:557.9px;top:304.8px;font-size:3.2px;line-height:4px;color:#9a9a9a">270</div>
<div class="x" style="left:571.4px;top:304.8px;font-size:3.2px;line-height:4px;color:#9a9a9a">280</div>
<div class="x" style="left:585.0px;top:304.8px;font-size:3.2px;line-height:4px;color:#9a9a9a">290</div>
<svg class="a" style="left:191px;top:304px" width="406" height="6" viewBox="191 304 406 6"><path stroke="#474747" stroke-width="0.5" d="M192.50 308.40V310M195.21 309.10V310M197.92 309.10V310M200.63 309.10V310M203.34 309.10V310M206.05 308.40V310M208.76 309.10V310M211.47 309.10V310M214.18 309.10V310M216.89 309.10V310M219.60 308.40V310M222.31 309.10V310M225.02 309.10V310M227.73 309.10V310M230.44 309.10V310M233.15 308.40V310M235.86 309.10V310M238.57 309.10V310M241.28 309.10V310M243.99 309.10V310M246.70 308.40V310M249.41 309.10V310M252.12 309.10V310M254.83 309.10V310M257.54 309.10V310M260.25 308.40V310M262.96 309.10V310M265.67 309.10V310M268.38 309.10V310M271.09 309.10V310M273.80 308.40V310M276.51 309.10V310M279.22 309.10V310M281.93 309.10V310M284.64 309.10V310M287.35 308.40V310M290.06 309.10V310M292.77 309.10V310M295.48 309.10V310M298.19 309.10V310M300.90 308.40V310M303.61 309.10V310M306.32 309.10V310M309.03 309.10V310M311.74 309.10V310M314.45 308.40V310M317.16 309.10V310M319.87 309.10V310M322.58 309.10V310M325.29 309.10V310M328.00 308.40V310M330.71 309.10V310M333.42 309.10V310M336.13 309.10V310M338.84 309.10V310M341.55 308.40V310M344.26 309.10V310M346.97 309.10V310M349.68 309.10V310M352.39 309.10V310M355.10 308.40V310M357.81 309.10V310M360.52 309.10V310M363.23 309.10V310M365.94 309.10V310M368.65 308.40V310M371.36 309.10V310M374.07 309.10V310M376.78 309.10V310M379.49 309.10V310M382.20 308.40V310M384.91 309.10V310M387.62 309.10V310M390.33 309.10V310M393.04 309.10V310M395.75 308.40V310M398.46 309.10V310M401.17 309.10V310M403.88 309.10V310M406.59 309.10V310M409.30 308.40V310M412.01 309.10V310M414.72 309.10V310M417.43 309.10V310M420.14 309.10V310M422.85 308.40V310M425.56 309.10V310M428.27 309.10V310M430.98 309.10V310M433.69 309.10V310M436.40 308.40V310M439.11 309.10V310M441.82 309.10V310M444.53 309.10V310M447.24 309.10V310M449.95 308.40V310M452.66 309.10V310M455.37 309.10V310M458.08 309.10V310M460.79 309.10V310M463.50 308.40V310M466.21 309.10V310M468.92 309.10V310M471.63 309.10V310M474.34 309.10V310M477.05 308.40V310M479.76 309.10V310M482.47 309.10V310M485.18 309.10V310M487.89 309.10V310M490.60 308.40V310M493.31 309.10V310M496.02 309.10V310M498.73 309.10V310M501.44 309.10V310M504.15 308.40V310M506.86 309.10V310M509.57 309.10V310M512.28 309.10V310M514.99 309.10V310M517.70 308.40V310M520.41 309.10V310M523.12 309.10V310M525.83 309.10V310M528.54 309.10V310M531.25 308.40V310M533.96 309.10V310M536.67 309.10V310M539.38 309.10V310M542.09 309.10V310M544.80 308.40V310M547.51 309.10V310M550.22 309.10V310M552.93 309.10V310M555.64 309.10V310M558.35 308.40V310M561.06 309.10V310M563.77 309.10V310M566.48 309.10V310M569.19 309.10V310M571.90 308.40V310M574.61 309.10V310M577.32 309.10V310M580.03 309.10V310M582.74 309.10V310M585.45 308.40V310M588.16 309.10V310M590.87 309.10V310M593.58 309.10V310"/></svg>
<div class="a" style="left:191px;top:310px;width:405px;height:4px;background:#353535;"></div>
<div class="a" style="left:191px;top:314px;width:405px;height:14px;background:#3d3d3d;border-top:0.6px solid #474747;box-sizing:border-box"></div>
<div class="a" style="left:191px;top:328px;width:405px;height:0.8px;background:#4a4a4a;"></div>
<div class="a" style="left:191px;top:328.8px;width:405px;height:10.2px;background:#2b2b2b;"></div>
<div class="a" style="left:256px;top:333.3px;width:84px;height:4.2px;background:#4a4a4a;"></div>
<svg class="a" style="left:590.3px;top:335px" width="3" height="2" viewBox="0 0 3 2"><path d="M0.3 0.3 L1.5 1.5 L2.7 0.3" stroke="#8a8a8a" stroke-width="0.5" fill="none"/></svg>
<!-- thumb -->
<div class="a" style="left:191.1px;top:314.6px;width:13.1px;height:13.4px;background:#f2f2f2;"></div>
<svg class="a" style="left:191px;top:314px" width="14" height="14" viewBox="191 314 14 14">
  <circle cx="197.4" cy="316.9" r="1.1" fill="#f0b27a"/>
  <path d="M196.2 316.6 Q197.4 315 198.6 316.6 Z" fill="#3a2010"/>
  <path d="M195.8 318.6 H199 L199.6 322.8 H195.3 Z" fill="#c42a2a"/>
  <path d="M196.2 322.8 L195.5 326.8 M198.6 322.8 L199.3 326.8" stroke="#7a8898" stroke-width="0.9"/>
</svg>
<!-- playhead -->
<div class="a" style="left:250.9px;top:306px;width:1.7px;height:24.5px;background:#2d7d8e;"></div>
<div class="a" style="left:249.3px;top:305px;width:4.4px;height:2.4px;background:#3fb0f0;border-radius:1px 1px 0 0"></div>
<div class="a" style="left:249.3px;top:307.4px;width:0;height:0;border-left:2.2px solid transparent;border-right:2.2px solid transparent;border-top:2px solid #3fb0f0;"></div>
<!-- bottom bar icons -->
<svg class="a" style="left:191px;top:332px" width="60" height="7" viewBox="191 332 60 7">
  <circle cx="194.5" cy="335.7" r="1.6" stroke="#888" stroke-width="0.6" fill="none"/>
  <path d="M193.5 335.7 H195.5 M194.5 334.7 V336.7" stroke="#888" stroke-width="0.4"/>
  <path d="M200 335.8 H225" stroke="#555" stroke-width="0.5"/>
  <rect x="207.9" y="334" width="1.5" height="3.5" fill="#bbb"/>
  <circle cx="226.5" cy="335.7" r="1.6" stroke="#aaa" stroke-width="0.6" fill="none"/>
  <path d="M225.6 334.8 L227.4 336.6 M227.4 334.8 L225.6 336.6" stroke="#aaa" stroke-width="0.4"/>
  <rect x="231" y="334" width="3" height="3.5" rx="1.2" stroke="#aaa" stroke-width="0.6" fill="none"/>
  <circle cx="238.5" cy="335.7" r="1.6" stroke="#888" stroke-width="0.6" fill="none"/>
  <rect x="243" y="334.2" width="3" height="3" stroke="#888" stroke-width="0.6" fill="none"/>
  <path d="M249 335.7 L250 335.7" stroke="#666" stroke-width="0.5"/>
</svg>

<svg width="780" height="470" viewBox="0 0 780 470" style="position:absolute;left:0;top:0">
<defs><pattern id="dots" width="2" height="2" patternUnits="userSpaceOnUse"><rect width="2" height="2" fill="#50cdab"/><circle cx="1" cy="1" r="0.5" fill="#44b898"/></pattern>
<clipPath id="c1"><circle cx="79.6" cy="236.9" r="35.3"/></clipPath>
<clipPath id="c2"><circle cx="29.7" cy="289" r="21"/></clipPath>
<clipPath id="c3"><circle cx="129.6" cy="289" r="21"/></clipPath>
<clipPath id="c4"><circle cx="734.6" cy="366.2" r="15.2"/></clipPath>
<clipPath id="c5"><circle cx="713.3" cy="388.7" r="9"/></clipPath>
<clipPath id="c6"><circle cx="756" cy="388.7" r="9"/></clipPath>
</defs>
<g fill="#3f3b54">
<rect x="73" y="272" width="14" height="80"/>
<circle cx="79.80" cy="279.00" r="8.3"/><circle cx="79.80" cy="289.50" r="8.3"/><circle cx="79.80" cy="300.00" r="8.3"/><circle cx="79.80" cy="310.50" r="8.3"/><circle cx="79.80" cy="321.00" r="8.3"/><circle cx="79.80" cy="331.50" r="8.3"/><circle cx="79.80" cy="342.00" r="8.3"/>
<rect x="68" y="296" width="24" height="10"/>
<circle cx="47.00" cy="294.50" r="7.8"/><circle cx="57.00" cy="297.67" r="7.8"/><circle cx="67.00" cy="300.83" r="7.8"/><circle cx="77.00" cy="304.00" r="7.8"/><path d="M47 289 L77 298.5 L77 310 L47 300.5 Z"/>
<circle cx="112.60" cy="294.50" r="7.8"/><circle cx="102.60" cy="297.67" r="7.8"/><circle cx="92.60" cy="300.83" r="7.8"/><circle cx="82.60" cy="304.00" r="7.8"/><path d="M112.6 289 L82.6 298.5 L82.6 310 L112.6 300.5 Z"/>
<path d="M32 359 Q32 347 44 347 H124 Q136 347 136 359 V455.5 Q136 458.5 133 458.5 H35 Q32 458.5 32 455.5 Z"/>
</g>
<circle cx="79.6" cy="236.9" r="35.3" fill="#4ab497"/><circle cx="83.6" cy="240.9" r="35.3" fill="url(#dots)" clip-path="url(#c1)"/>
<circle cx="29.7" cy="289" r="21" fill="#4ab497"/><circle cx="27.7" cy="293" r="21" fill="url(#dots)" clip-path="url(#c2)"/>
<circle cx="129.6" cy="289" r="21" fill="#4ab497"/><circle cx="131.6" cy="293" r="21" fill="url(#dots)" clip-path="url(#c3)"/>
<path fill="#4ab497" d="M96.5 218.6 L108.4 216.6 L111 222 L100 223.4 Z" clip-path="url(#c1)"/>
<path fill="#4ab497" d="M108.7 231.6 L114.5 231.2 L116 235 L108 235 Z" clip-path="url(#c1)"/>
<path fill="#fff" d="M103.3 210.8 L96.5 218.6 L108.4 216.6 L113.1 225.8 L108.7 231.6 L114.5 231.2 L122 231 L122 200 L100 200 Z"/>
<path fill="#4ab497" d="M17 272.1 L29.6 275.1 L30 278.5 L16 275.5 Z" clip-path="url(#c2)"/>
<path fill="#fff" d="M17 272.1 L29.6 275.1 L24.5 269.1 L24 262 L12 262 Z" clip-path="url(#c2)"/>
<path fill="#4ab497" d="M142.2 272.1 L129.6 275.1 L129.2 278.5 L143.2 275.5 Z" clip-path="url(#c3)"/>
<path fill="#fff" d="M142.2 272.1 L129.6 275.1 L134.7 269.1 L135.2 262 L147.2 262 Z" clip-path="url(#c3)"/>
<g fill="#3f3b54">
<rect x="731.2" y="375" width="7" height="40"/>
<circle cx="734.70" cy="382.00" r="3.9"/><circle cx="734.70" cy="386.67" r="3.9"/><circle cx="734.70" cy="391.33" r="3.9"/><circle cx="734.70" cy="396.00" r="3.9"/><circle cx="734.70" cy="400.67" r="3.9"/><circle cx="734.70" cy="405.33" r="3.9"/><circle cx="734.70" cy="410.00" r="3.9"/>
<circle cx="721.00" cy="392.00" r="3.3"/><circle cx="724.67" cy="394.17" r="3.3"/><circle cx="728.33" cy="396.33" r="3.3"/><circle cx="732.00" cy="398.50" r="3.3"/>
<circle cx="748.30" cy="392.00" r="3.3"/><circle cx="744.63" cy="394.17" r="3.3"/><circle cx="740.97" cy="396.33" r="3.3"/><circle cx="737.30" cy="398.50" r="3.3"/>
<path d="M714.3 429 Q714.3 413.4 730 413.4 H743.5 Q759 413.4 759 429 V458 Q759 461 756 461 H717.3 Q714.3 461 714.3 458 Z"/>
</g>
<circle cx="734.6" cy="366.2" r="15.2" fill="#4ab497"/><circle cx="736.6" cy="368.2" r="15.2" fill="url(#dots)" clip-path="url(#c4)"/>
<circle cx="713.3" cy="388.7" r="9" fill="#4ab497"/><circle cx="712.3" cy="390.7" r="9" fill="url(#dots)" clip-path="url(#c5)"/>
<circle cx="756" cy="388.7" r="9" fill="#4ab497"/><circle cx="757" cy="390.7" r="9" fill="url(#dots)" clip-path="url(#c6)"/>
<path fill="#4ab497" d="M741.88 358.32 747.00 357.46 748.12 359.78 743.38 360.39 Z" clip-path="url(#c4)"/>
<path fill="#eef8f5" d="M744.81 354.96 741.88 358.32 747.00 357.46 749.02 361.42 747.13 363.92 749.63 363.75 752.86 363.66 752.86 350.31 743.38 350.31 Z" clip-path="url(#c4)"/>
<path fill="#4ab497" d="M707.86 381.46 713.26 382.74 713.43 384.20 707.43 382.91 Z" clip-path="url(#c5)"/>
<path fill="#eef8f5" d="M707.86 381.46 713.26 382.74 711.07 380.17 710.86 377.13 705.71 377.13 Z" clip-path="url(#c5)"/>
<path fill="#4ab497" d="M761.40 381.46 756.00 382.74 755.83 384.20 761.83 382.91 Z" clip-path="url(#c6)"/>
<path fill="#eef8f5" d="M761.40 381.46 756.00 382.74 758.19 380.17 758.40 377.13 763.54 377.13 Z" clip-path="url(#c6)"/>
</svg>
</body></html>
